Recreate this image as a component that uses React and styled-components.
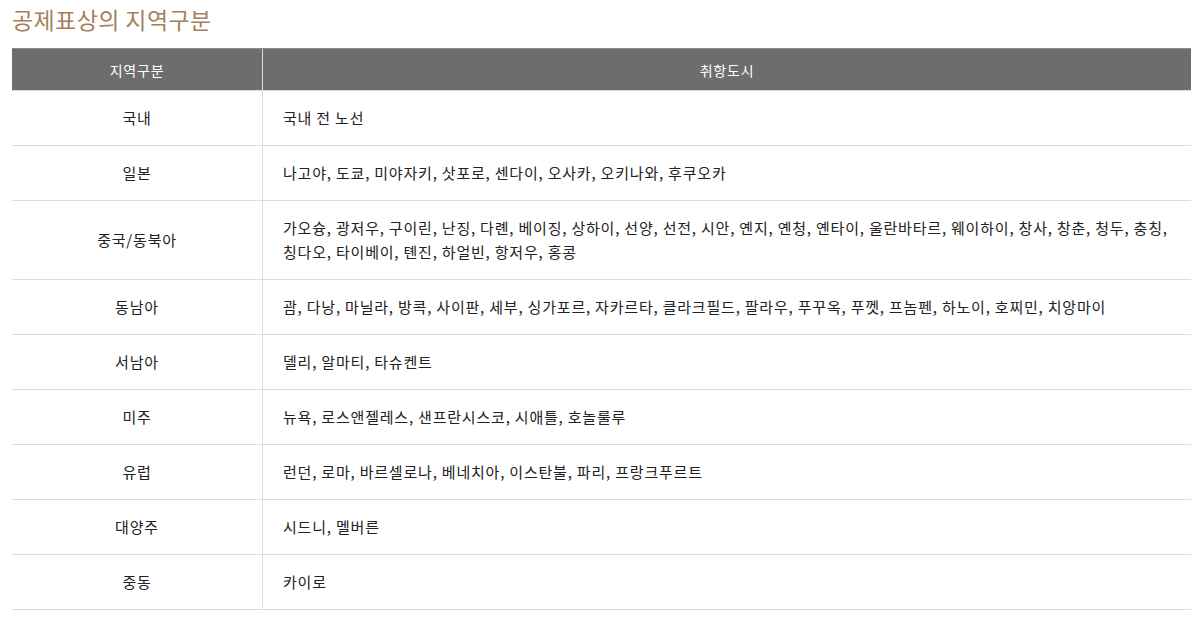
import React from "react"
import styled, { createGlobalStyle } from "styled-components"

const GlobalStyle = createGlobalStyle`
  body {
    margin: 0;
    background: #ffffff;
    font-family: "Noto Sans CJK KR", "Noto Sans", sans-serif;
  }
`

const Page = styled.div`
  padding: 4px 0 0 12px;
`

const Title = styled.h2`
  margin: 0 0 14px;
  font-size: 23px;
  font-weight: 400;
  line-height: 30px;
  color: #a4805e;
  letter-spacing: 0.4px;
`

const Table = styled.div`
  width: 1179px;
  border-top: 1px solid #8c8c8c;
`

const Row = styled.div`
  display: grid;
  grid-template-columns: 250px 1fr;
  border-bottom: 1px solid #dcdcdc;
  background: ${({ head }) => (head ? "#6d6d6e" : "#ffffff")};
  color: ${({ head }) => (head ? "#ffffff" : "#222222")};
`

const Cell = styled.div`
  display: flex;
  align-items: center;
  justify-content: ${({ center }) => (center ? "center" : "flex-start")};
  padding: ${({ head }) => (head ? "0 20px" : "15px 20px")};
  min-height: ${({ head }) => (head ? "41px" : "24px")};
  font-size: ${({ head }) => (head ? "14px" : "15px")};
  letter-spacing: ${({ head }) => (head ? "0.8px" : "0.8px")};
  line-height: 24px;
  border-left: ${({ divide }) => (divide ? "1px solid #dcdcdc" : "none")};
`

const rows = [
  ["국내", "국내 전 노선"],
  ["일본", "나고야, 도쿄, 미야자키, 삿포로, 센다이, 오사카, 오키나와, 후쿠오카"],
  [
    "중국/동북아",
    "가오슝, 광저우, 구이린, 난징, 다롄, 베이징, 상하이, 선양, 선전, 시안, 옌지, 옌청, 옌타이, 울란바타르, 웨이하이, 창사, 창춘, 청두, 충칭, 칭다오, 타이베이, 톈진, 하얼빈, 항저우, 홍콩",
  ],
  [
    "동남아",
    "괌, 다낭, 마닐라, 방콕, 사이판, 세부, 싱가포르, 자카르타, 클라크필드, 팔라우, 푸꾸옥, 푸껫, 프놈펜, 하노이, 호찌민, 치앙마이",
  ],
  ["서남아", "델리, 알마티, 타슈켄트"],
  ["미주", "뉴욕, 로스앤젤레스, 샌프란시스코, 시애틀, 호놀룰루"],
  ["유럽", "런던, 로마, 바르셀로나, 베네치아, 이스탄불, 파리, 프랑크푸르트"],
  ["대양주", "시드니, 멜버른"],
  ["중동", "카이로"],
]

const App = () => {
  return (
    <Page>
      <GlobalStyle />
      <Title>공제표상의 지역구분</Title>
      <Table>
        <Row head>
          <Cell head center>지역구분</Cell>
          <Cell head center divide>취항도시</Cell>
        </Row>
        {rows.map(([region, cities]) => (
          <Row key={region}>
            <Cell center>{region}</Cell>
            <Cell divide>{cities}</Cell>
          </Row>
        ))}
      </Table>
    </Page>
  )
}

export default App
